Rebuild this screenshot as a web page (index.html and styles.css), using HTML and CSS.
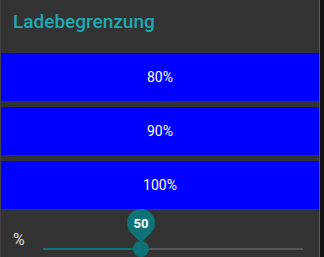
FILE: index.html
```html
<!DOCTYPE html>
<html>
<head>
<meta charset="utf-8">
<link rel="stylesheet" href="styles.css">
</head>
<body>
<div class="card">
  <div class="header"><span class="title">Ladebegrenzung</span></div>
  <div class="buttons">
    <div class="btn">80%</div>
    <div class="btn">90%</div>
    <div class="btn">100%</div>
  </div>
  <div class="slider-row">
    <span class="unit">%</span>
    <div class="track">
      <div class="rail"></div>
      <div class="fill" style="width:37.5%"></div>
      <div class="thumb" style="left:37.5%"></div>
      <div class="bubble" style="left:37.5%"><span class="bubble-text">50</span></div>
    </div>
  </div>
</div>
</body>
</html>
```
FILE: styles.css
```css
html, body {
  margin: 0;
  padding: 0;
  background: #111111;
  font-family: Roboto, "Liberation Sans", sans-serif;
}
.card {
  width: 318px;
  height: 257px;
  background: #333333;
  border-left: 1px solid #444444;
  border-right: 1px solid #5a5a5a;
  overflow: hidden;
}
.header {
  height: 43px;
  padding: 10px 0 0 12px;
}
.title {
  display: block;
  font-size: 19px;
  line-height: 24px;
  color: #1eaab4;
  font-weight: 500;
}
.buttons {
  display: flex;
  flex-direction: column;
  gap: 6px;
}
.btn {
  height: 48px;
  background: #0000ff;
  color: #ffffff;
  font-size: 14px;
  font-weight: 400;
  display: flex;
  align-items: center;
  justify-content: center;
}
.slider-row {
  display: flex;
  height: 48px;
  padding: 0 16px 0 12px;
}
.unit {
  width: 30px;
  color: #dddddd;
  font-size: 16px;
  line-height: 20px;
  margin-top: 21px;
}
.track {
  flex: 1;
  position: relative;
}
.rail {
  position: absolute;
  left: 0;
  right: 0;
  top: 39px;
  height: 2px;
  background: #555555;
}
.fill {
  position: absolute;
  left: 0;
  top: 39px;
  height: 2px;
  background: #0d7377;
}
.thumb {
  position: absolute;
  top: 32px;
  width: 16px;
  height: 16px;
  margin-left: -8px;
  border-radius: 50%;
  background: #0d7377;
}
.bubble {
  position: absolute;
  top: 0;
  width: 28px;
  height: 28px;
  margin-left: -14px;
  background: #0d7377;
  border-radius: 50% 50% 0 50%;
  transform: rotate(45deg);
  display: flex;
  align-items: center;
  justify-content: center;
}
.bubble-text {
  transform: rotate(-45deg);
  color: #ffffff;
  font-size: 13px;
  font-weight: 700;
}
```
